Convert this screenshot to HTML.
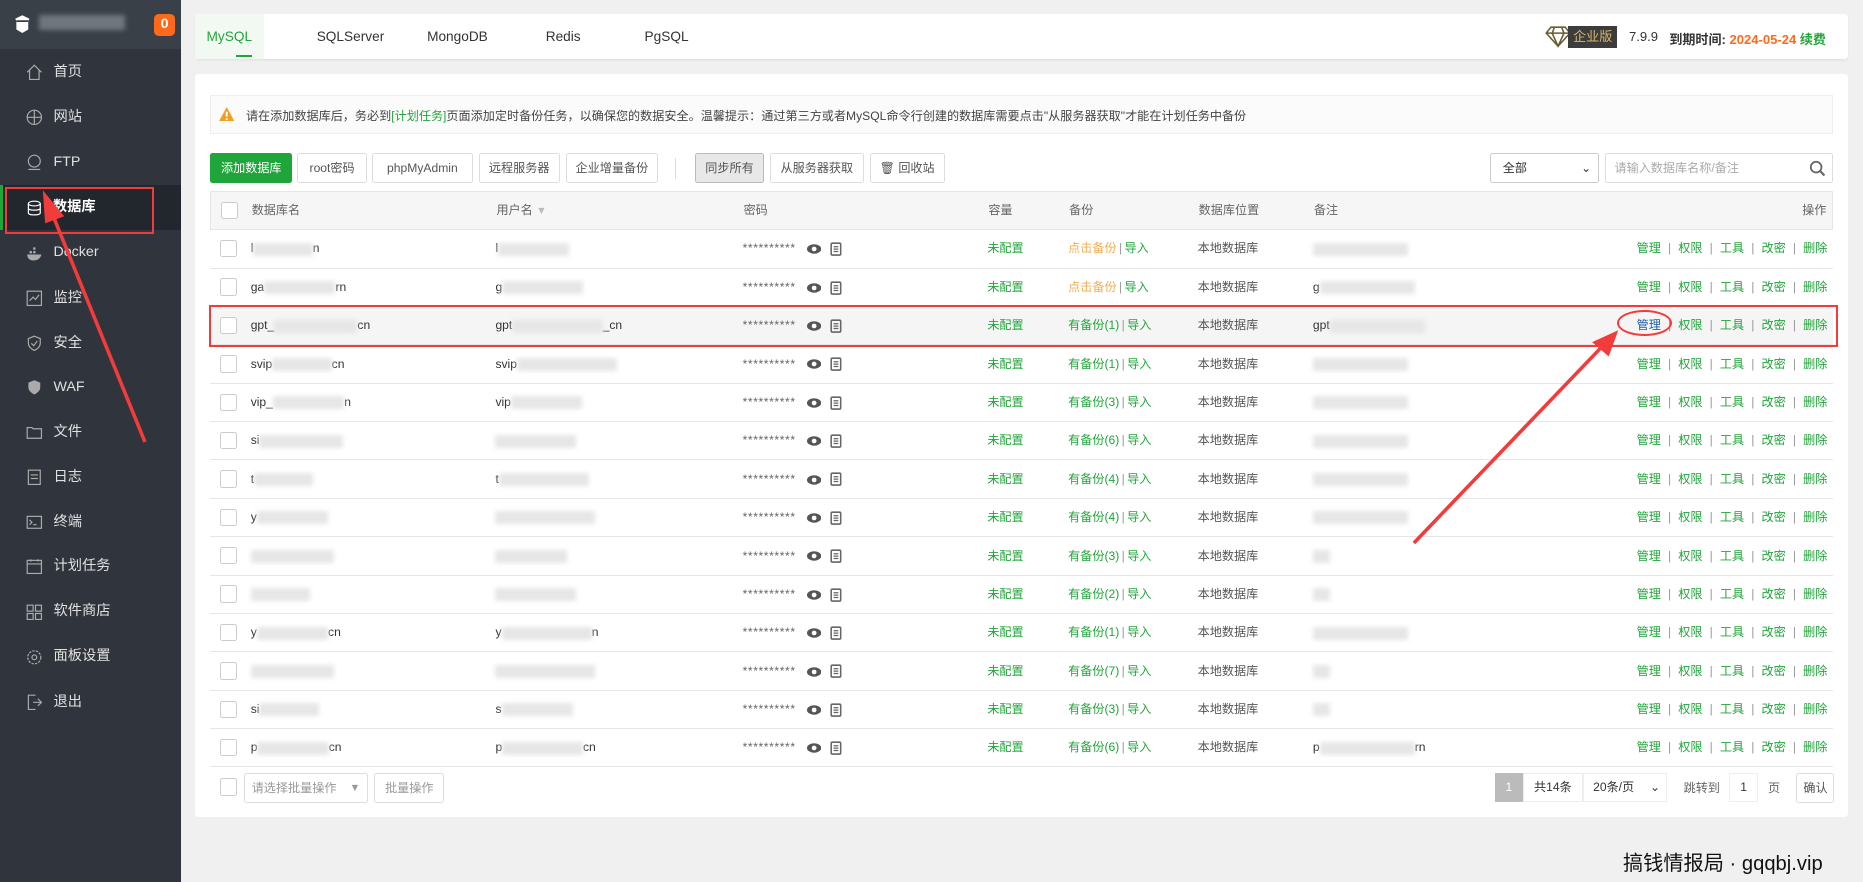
<!DOCTYPE html>
<html><head><meta charset="utf-8"><style>
html,body{margin:0;padding:0;width:1863px;height:882px;overflow:hidden;background:#f0f0f0}
#w{width:1568px;height:743px;zoom:1.18814;position:relative;font-family:"Liberation Sans","Noto Sans CJK SC",sans-serif;font-size:10.2px;color:#333;background:#f0f0f0}
.abs{position:absolute}
#side{left:0;top:0;width:152px;height:743px;background:#30353d}
#logo{left:0;top:0;width:152px;height:41px;background:#3a4048}
.mi{position:absolute;left:0;width:152px;height:38px;line-height:38px;color:#e0e0e0;font-size:12px}
.mi span{position:absolute;left:45px}
.mi svg{position:absolute;left:22px;top:12px}
.card{background:#fff;border-radius:3px}
.tab{position:absolute;top:12px;height:38px;line-height:38px;font-size:11.5px;color:#333;text-align:center}
.btn{position:absolute;top:129px;height:25px;line-height:24px;border:1px solid #ddd;border-radius:2px;box-sizing:border-box;text-align:center;font-size:10.2px;color:#555;background:#fff}
.g{color:#20a53a}.o{color:#f0ad4e}
.row{position:absolute;left:177px;width:1366px;height:32px;border-bottom:1px solid #e6e6e6;box-sizing:border-box}
.c{position:absolute;top:0;line-height:31px;white-space:nowrap}
.cb{position:absolute;left:8px;top:8px;width:13px;height:13px;border:1px solid #ccc;border-radius:2px;background:#fff}
.bl{display:inline-block;height:11px;background:#e6e6e6;filter:blur(2px);vertical-align:middle}
.sep{color:#999;margin:0 6px}
</style></head><body><div id="w">
<div id="side" class="abs">
<div id="logo" class="abs">
<svg class="abs" style="left:12px;top:12px" width="14" height="17" viewBox="0 0 14 17"><path d="M7 1 L13 4 L12 6 L12 13 L7 16 L2 13 L2 6 L1 4 Z" fill="#fff"/><path d="M2 6 H12" stroke="#3a4048" stroke-width="1.5"/></svg>
<div class="abs" style="left:33px;top:13px;width:72px;height:12px;background:#70767e;filter:blur(2px)"></div>
<div class="abs" style="left:130px;top:12px;width:17px;height:18px;background:#ff6a1a;border-radius:4px;color:#fff;font-weight:bold;text-align:center;line-height:18px;font-size:12px">0</div>
</div>
<div class="mi" style="top:42px"><svg width="14" height="14"><path d="M1 7 L7 1 L13 7 M3 5 V13 H11 V5" fill="none" stroke="#aaa"/></svg><span>首页</span></div>
<div class="mi" style="top:80px"><svg width="14" height="14"><circle cx="7" cy="7" r="6" fill="none" stroke="#aaa"/><path d="M1 7H13M7 1V13" stroke="#aaa"/></svg><span>网站</span></div>
<div class="mi" style="top:118px"><svg width="14" height="14"><circle cx="7" cy="6" r="5" fill="none" stroke="#aaa"/><path d="M2 13H12" stroke="#aaa"/></svg><span>FTP</span></div>
<div class="mi" style="top:156px;background:#22262d;border-left:3px solid #20a53a;box-sizing:border-box;color:#fff"><svg width="14" height="14" style="left:19px"><ellipse cx="7" cy="3" rx="5" ry="2" fill="none" stroke="#fff"/><path d="M2 3V11C2 13 12 13 12 11V3M2 7C2 9 12 9 12 7" fill="none" stroke="#fff"/></svg><span style="left:42px;font-weight:bold">数据库</span></div>
<div class="mi" style="top:194px"><svg width="14" height="14"><path d="M1 8H13C12 12 9 13 6 13C3 13 1 11 1 8ZM3 5h2v2H3zM6 5h2v2H6zM6 2h2v2H6z" fill="#aaa"/></svg><span>Docker</span></div>
<div class="mi" style="top:232px"><svg width="14" height="14"><rect x="1" y="1" width="12" height="12" fill="none" stroke="#aaa"/><path d="M3 9L6 6L8 8L11 4" fill="none" stroke="#aaa"/></svg><span>监控</span></div>
<div class="mi" style="top:270px"><svg width="14" height="14"><path d="M7 1L12 3V7C12 10 9 12 7 13C5 12 2 10 2 7V3Z" fill="none" stroke="#aaa"/><path d="M4.5 7L6.5 9L9.5 5" fill="none" stroke="#aaa"/></svg><span>安全</span></div>
<div class="mi" style="top:307px"><svg width="14" height="14"><path d="M7 1L12 3V7C12 10 9 12 7 13C5 12 2 10 2 7V3Z" fill="#aaa"/></svg><span>WAF</span></div>
<div class="mi" style="top:345px"><svg width="14" height="14"><path d="M1 3H5L6 4H13V12H1Z" fill="none" stroke="#aaa"/></svg><span>文件</span></div>
<div class="mi" style="top:383px"><svg width="14" height="14"><rect x="2" y="1" width="10" height="12" fill="none" stroke="#aaa"/><path d="M4 5H10M4 8H10" stroke="#aaa"/></svg><span>日志</span></div>
<div class="mi" style="top:421px"><svg width="14" height="14"><rect x="1" y="2" width="12" height="10" fill="none" stroke="#aaa"/><path d="M3 5L5 7L3 9M6 9H9" fill="none" stroke="#aaa"/></svg><span>终端</span></div>
<div class="mi" style="top:458px"><svg width="14" height="14"><rect x="1" y="2" width="12" height="11" fill="none" stroke="#aaa"/><path d="M1 5H13M4 1V3M10 1V3" stroke="#aaa"/></svg><span>计划任务</span></div>
<div class="mi" style="top:496px"><svg width="14" height="14"><rect x="1" y="1" width="5" height="5" fill="none" stroke="#aaa"/><rect x="8" y="1" width="5" height="5" fill="none" stroke="#aaa"/><rect x="1" y="8" width="5" height="5" fill="none" stroke="#aaa"/><rect x="8" y="8" width="5" height="5" fill="none" stroke="#aaa"/></svg><span>软件商店</span></div>
<div class="mi" style="top:534px"><svg width="14" height="14"><circle cx="7" cy="7" r="5.5" fill="none" stroke="#aaa" stroke-dasharray="2 1"/><circle cx="7" cy="7" r="2" fill="none" stroke="#aaa"/></svg><span>面板设置</span></div>
<div class="mi" style="top:572px"><svg width="14" height="14"><path d="M8 1H2V13H8M6 7H13M10 4L13 7L10 10" fill="none" stroke="#aaa"/></svg><span>退出</span></div>
<div class="abs" style="left:4px;top:157px;width:122px;height:37px;border:2px solid #f23c3c"></div>
</div>

<div class="abs card" style="left:164px;top:12px;width:1391px;height:38px;box-shadow:0 1px 2px rgba(0,0,0,.06)"></div>
<div class="tab" style="left:164px;width:58px;background:#f2f9f3;color:#20a53a">MySQL</div>
<div class="abs" style="left:199px;top:46px;width:13px;height:2px;background:#20a53a"></div>
<div class="tab" style="left:255px;width:80px">SQLServer</div>
<div class="tab" style="left:345px;width:80px">MongoDB</div>
<div class="tab" style="left:444px;width:60px">Redis</div>
<div class="tab" style="left:531px;width:60px">PgSQL</div>
<svg class="abs" style="left:1300px;top:22px" width="22" height="18" viewBox="0 0 22 18"><path d="M5 1H17L21 6L11 17L1 6Z M1 6H21 M8 1L6 6L11 17L16 6L14 1" fill="#fff" stroke="#6b5a32" stroke-width="1.3"/></svg>
<div class="abs" style="left:1320px;top:22px;width:41px;height:18px;background:#3c3c3c;color:#d9b56a;font-size:11px;line-height:18px;text-align:center">企业版</div>
<div class="abs" style="left:1371px;top:24px;font-size:11px;color:#333">7.9.9</div>
<div class="abs" style="left:1405px;top:24px;font-size:11px;font-weight:bold;color:#333">到期时间: <span style="color:#ff6a1a">2024-05-24</span> <span class="g">续费</span></div>

<div class="abs card" style="left:164px;top:62px;width:1391px;height:626px"></div>
<div class="abs" style="left:177px;top:80px;width:1366px;height:33px;background:#fbfbfb;border:1px solid #eee;box-sizing:border-box"></div>
<svg class="abs" style="left:184px;top:90px" width="13" height="12"><path d="M6.5 0L13 12H0Z" fill="#f0a020"/><path d="M6.5 4V8M6.5 9.5V11" stroke="#fff" stroke-width="1.5"/></svg>
<div class="abs" style="left:207px;top:90px;font-size:10.2px;color:#444;white-space:nowrap">请在添加数据库后，务必到<span class="g">[计划任务]</span>页面添加定时备份任务，以确保您的数据安全。温馨提示：通过第三方或者MySQL命令行创建的数据库需要点击"从服务器获取"才能在计划任务中备份</div>

<div class="btn" style="left:177px;width:69px;background:#20a53a;border-color:#20a53a;color:#fff">添加数据库</div>
<div class="btn" style="left:250px;width:59px">root密码</div>
<div class="btn" style="left:313px;width:85px">phpMyAdmin</div>
<div class="btn" style="left:403px;width:68px">远程服务器</div>
<div class="btn" style="left:476px;width:78px">企业增量备份</div>
<div class="abs" style="left:568px;top:133px;width:1px;height:18px;background:#ddd"></div>
<div class="btn" style="left:585px;width:58px;background:#e8e8e8;border-color:#bbb">同步所有</div>
<div class="btn" style="left:648px;width:79px">从服务器获取</div>
<div class="btn" style="left:732px;width:63px">🗑 回收站</div>
<div class="btn" style="left:1254px;width:92px;text-align:left;padding-left:10px;color:#333;border-color:#ccc">全部<span style="position:absolute;right:6px;font-size:10px">⌄</span></div>
<div class="btn" style="left:1351px;width:192px;text-align:left;padding-left:7px;color:#aaa">请输入数据库名称/备注
<svg class="abs" style="right:6px;top:5px" width="14" height="14"><circle cx="6" cy="6" r="4.5" fill="none" stroke="#666" stroke-width="1.5"/><path d="M9.5 9.5L13 13" stroke="#666" stroke-width="1.8"/></svg></div>

<div class="row" style="top:161px;height:33px;background:#f6f6f6;border:1px solid #e6e6e6;color:#666">
<div class="cb"></div><div class="c" style="left:34px">数据库名</div><div class="c" style="left:240px">用户名 <span style="color:#bbb;font-size:9px">▼</span></div><div class="c" style="left:448px">密码</div><div class="c" style="left:654px">容量</div><div class="c" style="left:722px">备份</div><div class="c" style="left:831px">数据库位置</div><div class="c" style="left:928px">备注</div><div class="c" style="right:5px">操作</div>
</div>

<div id="rows"></div>
<script>
var d=[["l","n","l",""],["ga","rn","g",""],["gpt_","cn","gpt","_cn"],["svip","cn","svip",""],["vip_","n","vip",""],["si","","",""],["t","","t",""],["y","","",""],["","","",""],["","","",""],["y","cn","y","n"],["","","",""],["si","","s",""],["p","cn","p","cn"]];
var h="";
for(var i=0;i<14;i++){var r=d[i];var t=194+i*32.3;
var bk=(i<2)?'<span class="o">点击备份</span><span class="sep" style="margin:0 2px">|</span><span class="g">导入</span>':'<span class="g">有备份('+[0,0,1,1,3,6,4,4,3,2,1,7,3,6][i]+')</span><span class="sep" style="margin:0 2px">|</span><span class="g">导入</span>';
h+='<div class="row" style="top:'+t+'px;'+(i==2?'background:#f5f5f5':'')+'"><div class="cb"></div>'+
'<div class="c" style="left:34px">'+r[0]+'<span class="bl" style="width:'+(50+i%3*10)+'px"></span>'+r[1]+'</div>'+
'<div class="c" style="left:240px">'+r[2]+'<span class="bl" style="width:'+(60+i%4*8)+'px"></span>'+r[3]+'</div>'+
'<div class="c" style="left:448px;color:#666;letter-spacing:0.5px">********** <svg width="12" height="10" style="vertical-align:middle;margin-left:6px"><ellipse cx="6" cy="5" rx="6" ry="4" fill="#555"/><circle cx="6" cy="5" r="2" fill="#fff"/></svg> <svg width="10" height="12" style="vertical-align:middle;margin-left:4px"><rect x="1" y="1" width="8" height="10" rx="1" fill="none" stroke="#666" stroke-width="1.3"/><path d="M3 4H7M3 6H7M3 8H7" stroke="#666"/></svg></div>'+
'<div class="c g" style="left:654px">未配置</div><div class="c" style="left:722px">'+bk+'</div><div class="c" style="left:831px;color:#555">本地数据库</div>'+
'<div class="c" style="left:928px">'+(i==1?'g':i==2?'gpt':i==13?'p':'')+'<span class="bl" style="width:'+(i>7&&i!=10&&i!=13?14:80)+'px"></span>'+(i==13?'rn':'')+'</div>'+
'<div class="c" style="right:5px"><span class="g" style="'+(i==2?'color:#1e5fa8':'')+'">管理</span><span class="sep">|</span><span class="g">权限</span><span class="sep">|</span><span class="g">工具</span><span class="sep">|</span><span class="g">改密</span><span class="sep">|</span><span class="g">删除</span></div></div>';}
document.getElementById("rows").innerHTML=h;
</script>

<div class="abs" style="left:185px;top:655px;width:13px;height:13px;border:1px solid #ccc;border-radius:2px"></div>
<div class="btn" style="left:205px;top:651px;width:105px;text-align:left;padding-left:6px;color:#999">请选择批量操作<span style="position:absolute;right:6px;font-size:9px;color:#999">▼</span></div>
<div class="btn" style="left:315px;top:651px;width:59px;color:#999">批量操作</div>
<div class="abs" style="left:1258px;top:651px;width:24px;height:24px;background:#bbb;color:#fff;text-align:center;line-height:24px">1</div>
<div class="abs" style="left:1282px;top:651px;width:50px;height:24px;border:1px solid #eee;box-sizing:border-box;text-align:center;line-height:22px">共14条</div>
<div class="abs" style="left:1332px;top:651px;width:71px;height:24px;border:1px solid #eee;box-sizing:border-box;line-height:22px;padding-left:8px">20条/页<span style="position:absolute;right:5px;font-size:10px">⌄</span></div>
<div class="abs" style="left:1417px;top:656px;color:#666">跳转到</div>
<div class="abs" style="left:1455px;top:651px;width:25px;height:24px;border:1px solid #eee;box-sizing:border-box;text-align:center;line-height:22px">1</div>
<div class="abs" style="left:1488px;top:656px;color:#666">页</div>
<div class="btn" style="left:1512px;top:651px;width:32px;">确认</div>

<div class="abs" style="left:1366px;top:713px;font-size:17px;color:#111">搞钱情报局 · gqqbj.vip</div>

<div class="abs" style="left:176px;top:257px;width:1371px;height:35px;border:2px solid #f23c3c;box-sizing:border-box"></div>
<div class="abs" style="left:1361px;top:261px;width:46px;height:22px;border:2px solid #f23c3c;border-radius:50%;box-sizing:border-box"></div>
<svg class="abs" style="left:0;top:0" width="1568" height="743"><path d="M122 372L44 180" stroke="#f23c3c" stroke-width="3"/><path d="M36 160L54 182L38 188Z" fill="#f23c3c"/><path d="M1190 457L1350 290" stroke="#f23c3c" stroke-width="3"/><path d="M1362 278L1354 300L1340 288Z" fill="#f23c3c"/></svg>
</div></body></html>
